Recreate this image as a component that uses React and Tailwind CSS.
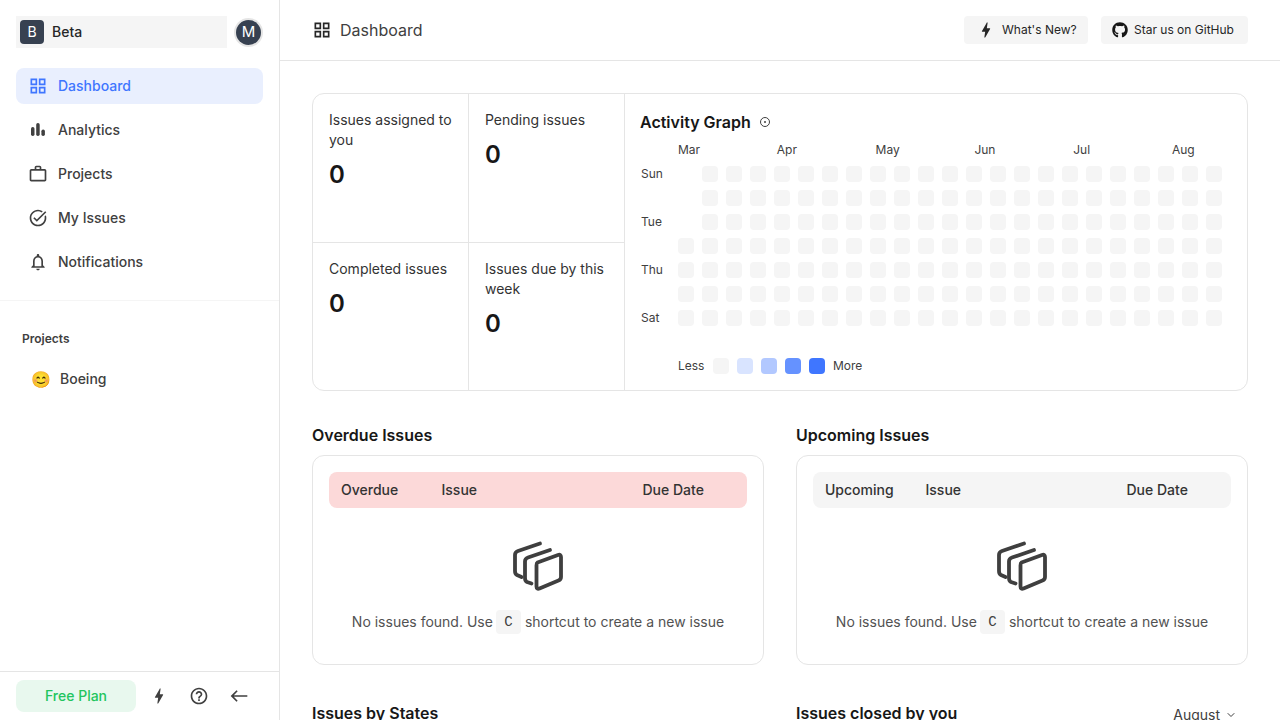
import React from 'react';
import { ChevronDown } from 'lucide-react';
import { FaGithub } from 'react-icons/fa';
import {
  MdOutlineGridView,
  MdOutlineWorkOutline,
  MdOutlineTaskAlt,
  MdOutlineNotifications,
  MdBolt,
  MdOutlineHelpOutline,
  MdOutlineWest,
} from 'react-icons/md';

const BarsIcon = ({ className }) => (
  <svg viewBox="0 0 20 20" className={className} fill="currentColor">
    <rect x="3" y="7" width="3.5" height="9" rx="1.7" />
    <rect x="8.2" y="3" width="3.5" height="13" rx="1.7" />
    <rect x="13.4" y="9.5" width="3.5" height="6.5" rx="1.7" />
  </svg>
);

const StackIcon = () => (
  <svg viewBox="0 0 50 50" className="w-[50px] h-[50px] text-[#3f3f3f]" fill="none" stroke="currentColor" strokeWidth="3.8" strokeLinecap="round" strokeLinejoin="round">
    <path d="M27 2.5 L5 10 Q2 11 2 14 V30 Q2 33 4 34 L8.5 36" />
    <path d="M37 9 L15 16.5 Q12 17.5 12 20.5 V37 Q12 40 14 41 L18.5 42.5" />
    <path d="M24.5 21.5 L45 14 Q48 13 48 16 V36 Q48 38.5 45.5 39.5 L26.5 47.5 Q23.5 48.5 23.5 45.5 V24.5 Q23.5 22 24.5 21.5 Z" />
  </svg>
);

const navItems = [
  { label: 'Dashboard', Icon: MdOutlineGridView, active: true },
  { label: 'Analytics', Icon: BarsIcon },
  { label: 'Projects', Icon: MdOutlineWorkOutline },
  { label: 'My Issues', Icon: MdOutlineTaskAlt },
  { label: 'Notifications', Icon: MdOutlineNotifications },
];

const weekdays = ['Sun', '', 'Tue', '', 'Thu', '', 'Sat'];
const months = ['Mar', 'Apr', 'May', 'Jun', 'Jul', 'Aug'];
const legend = ['bg-[#f5f5f5]', 'bg-[#d9e4ff]', 'bg-[#b2c8ff]', 'bg-[#6592ff]', 'bg-[#3f76ff]'];

const StatCell = ({ title, className }) => (
  <div className={`p-4 ${className}`}>
    <p className="text-sm leading-5 text-[#333333]">{title}</p>
    <p className="mt-[9px] text-2xl leading-8 font-semibold text-[#171717]">0</p>
  </div>
);

const ActivityGraph = () => (
  <div className="flex-1 pl-[15px] pt-4">
    <div className="flex items-center gap-2 h-6">
      <h3 className="text-base font-semibold text-[#171717]">Activity Graph</h3>
      <svg viewBox="0 0 12 12" className="w-3 h-3 text-[#404040]" fill="none" stroke="currentColor">
        <circle cx="6" cy="6" r="4.5" />
        <circle cx="6" cy="6" r="1" fill="currentColor" stroke="none" />
      </svg>
    </div>
    <div className="flex mt-[8px]">
      <div className="w-[38px] pl-px pt-5 flex flex-col">
        {weekdays.map((day, i) => (
          <div key={i} className="h-6 flex items-center text-xs text-[#404040]">{day}</div>
        ))}
      </div>
      <div>
        <div className="flex h-4 text-xs leading-4 text-[#404040]">
          {months.map((m) => (
            <span key={m} className="w-[98.8px]">{m}</span>
          ))}
        </div>
        <div className="grid grid-rows-7 grid-flow-col auto-cols-[16px] gap-2 mt-2">
          {Array.from({ length: 161 }).map((_, i) => (
            <div key={i} className={i < 3 ? 'w-4 h-4' : 'w-4 h-4 rounded bg-[#f5f5f5]'} />
          ))}
        </div>
        <div className="flex items-center mt-[32px] h-4 text-xs text-[#404040]">
          <span className="w-[35px]">Less</span>
          <div className="flex gap-2">
            {legend.map((c) => (
              <div key={c} className={`w-4 h-4 rounded ${c}`} />
            ))}
          </div>
          <span className="ml-2">More</span>
        </div>
      </div>
    </div>
  </div>
);

const IssueTable = ({ title, first, headClass }) => (
  <div>
    <h3 className="text-base leading-6 font-semibold text-[#171717] mb-2">{title}</h3>
    <div className="h-[210px] border border-[#e5e5e5] rounded-xl p-4">
      <div className={`grid grid-cols-[100.5px_201px_1fr] items-center h-9 px-3 rounded-lg text-sm font-medium text-[#333333] ${headClass}`}>
        <span>{first}</span>
        <span>Issue</span>
        <span>Due Date</span>
      </div>
      <div className="flex flex-col items-center mt-[33px]">
        <StackIcon />
        <p className="flex items-center mt-[19px] text-sm text-[#525252]">
          No issues found. Use
          <kbd className="ml-[3px] mr-[4px] w-[25px] h-6 rounded bg-[#f5f5f5] flex items-center justify-center text-sm text-[#404040] font-['Liberation_Mono',monospace]">C</kbd>
          shortcut to create a new issue
        </p>
      </div>
    </div>
  </div>
);

const App = () => {
  return (
    <div className="flex h-screen overflow-hidden bg-white font-['Inter',sans-serif] text-[#262626]">
      {/* Sidebar */}
      <aside className="w-[280px] shrink-0 border-r border-[#e5e5e5] flex flex-col">
        <div className="flex items-center justify-between pl-4 pr-[18px] pt-4">
          <button className="w-[211px] h-8 bg-[#f5f5f5] flex items-center gap-2 px-1 text-sm font-medium text-[#262626]">
            <span className="w-6 h-6 rounded bg-[#374151] text-white flex items-center justify-center text-sm font-normal">B</span>
            Beta
          </button>
          <span className="w-[25px] h-[25px] rounded-full bg-[#374151] ring-2 ring-[#e5e5e5] text-white flex items-center justify-center text-[15px] font-normal">M</span>
        </div>
        <nav className="flex flex-col gap-2 px-4 mt-5">
          {navItems.map(({ label, Icon, active }) => (
            <a
              key={label}
              className={`flex items-center gap-2.5 h-9 px-3 rounded-lg text-sm font-medium ${active ? 'bg-[#e9effe] text-[#3f76ff]' : 'text-[#404040]'}`}
            >
              <Icon className="w-5 h-5" />
              {label}
            </a>
          ))}
        </nav>
        <div className="mt-5 border-t border-[#f5f5f5] pt-[30px] px-[22px]">
          <h4 className="text-xs leading-4 font-semibold text-[#404040]">Projects</h4>
          <div className="flex items-center gap-[10px] mt-[24px] pl-[9px] h-4 text-sm font-medium text-[#404040]">
            <span className="w-[19px] text-base">😊</span>
            Boeing
          </div>
        </div>
        <div className="mt-auto h-[49px] border-t border-[#e5e5e5] flex items-center px-4 gap-[13px]">
          <button className="w-[120px] h-8 rounded-lg bg-[#e8f8ee] text-[#22c55e] text-sm font-medium">Free Plan</button>
          <MdBolt className="w-5 h-5 text-[#404040]" />
          <MdOutlineHelpOutline className="w-5 h-5 ml-[7px] text-[#404040]" />
          <MdOutlineWest className="w-5 h-5 ml-[7px] text-[#404040]" />
        </div>
      </aside>

      {/* Main */}
      <main className="flex-1 min-w-0 overflow-hidden">
        <header className="h-[61px] border-b border-[#e5e5e5] flex items-center justify-between px-8">
          <div className="flex items-center gap-2 text-base text-[#404040]">
            <MdOutlineGridView className="w-5 h-5 text-[#262626]" />
            Dashboard
          </div>
          <div className="flex items-center gap-[13px]">
            <button className="h-7 w-[124px] rounded bg-[#f5f5f5] flex items-center gap-1.5 pl-3 text-xs font-normal text-[#262626]">
              <MdBolt className="w-5 h-5" />
              What's New?
            </button>
            <button className="h-7 w-[147px] rounded bg-[#f5f5f5] flex items-center gap-1.5 pl-[11px] text-xs font-normal text-[#262626]">
              <FaGithub className="w-4 h-4 text-[#171717]" />
              Star us on GitHub
            </button>
          </div>
        </header>

        <div className="px-8 pt-8">
          <section className="flex h-[298px] border border-[#e5e5e5] rounded-xl">
            <div className="w-[312px] shrink-0 grid grid-cols-2 grid-rows-[149px_147px]">
              <StatCell title="Issues assigned to you" className="border-r border-b border-[#e5e5e5]" />
              <StatCell title="Pending issues" className="border-r border-b border-[#e5e5e5]" />
              <StatCell title="Completed issues" className="border-r border-[#e5e5e5]" />
              <StatCell title="Issues due by this week" className="border-r border-[#e5e5e5]" />
            </div>
            <ActivityGraph />
          </section>

          <section className="grid grid-cols-2 gap-8 mt-8">
            <IssueTable title="Overdue Issues" first="Overdue" headClass="bg-[#fcd9d9]" />
            <IssueTable title="Upcoming Issues" first="Upcoming" headClass="bg-[#f5f5f5]" />
          </section>

          <section className="grid grid-cols-2 gap-8 mt-9">
            <h3 className="text-base leading-6 font-semibold text-[#171717]">Issues by States</h3>
            <div className="flex items-start justify-between">
              <h3 className="text-base leading-6 font-semibold text-[#171717]">Issues closed by you</h3>
              <span className="flex items-center gap-[5px] mt-1 mr-[11px] text-sm text-[#404040]">
                August
                <ChevronDown className="w-3 h-3" />
              </span>
            </div>
          </section>
        </div>
      </main>
    </div>
  );
};

export default App;
